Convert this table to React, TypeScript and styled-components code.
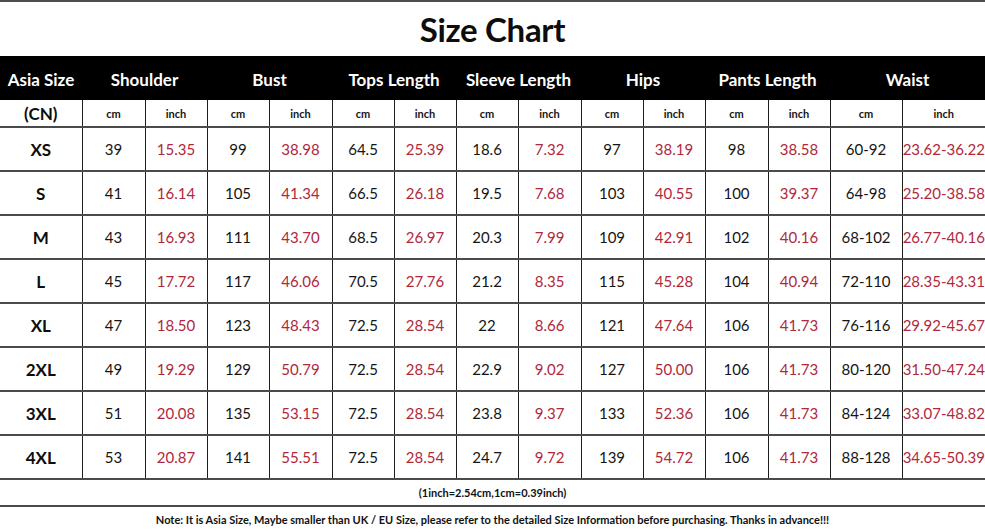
import React from "react";
import styled, { createGlobalStyle } from "styled-components";

const GlobalStyle = createGlobalStyle`
  html, body {
    margin: 0;
    padding: 0;
    background: #ffffff;
  }
  body {
    font-family: "Lato", "Open Sans", sans-serif;
    color: #111111;
  }
`;

const Page = styled.div`
  width: 985px;
  height: 532px;
  overflow: hidden;
  background: #ffffff;
`;

const Title = styled.h1`
  margin: 0;
  height: 54px;
  border-top: 2px solid #4d4d4d;
  display: flex;
  align-items: center;
  justify-content: center;
  font-size: 33px;
  font-weight: 700;
  letter-spacing: -0.3px;
  color: #0d0d0d;
`;

const Table = styled.table`
  width: 985px;
  table-layout: fixed;
  border-collapse: collapse;
  border-spacing: 0;
`;

const HeadRow = styled.tr`
  height: 44px;
  background: #000000;
`;

const HeadCell = styled.th`
  padding: 2px 0 0;
  color: #ffffff;
  font-size: 17px;
  font-weight: 700;
  text-align: center;
  white-space: nowrap;
`;

const UnitRow = styled.tr`
  height: 27px;
`;

const DataRow = styled.tr`
  height: 44px;
`;

const Cell = styled.td<{ $red?: boolean; $first?: boolean }>`
  padding: 0;
  text-align: center;
  white-space: nowrap;
  font-size: 15px;
  color: ${({ $red }) => ($red ? "#b0283c" : "#151515")};
  border-bottom: 2px solid #4a4a4a;
  border-left: ${({ $first }) => ($first ? "none" : "1px solid #1e1e1e")};
`;

const SizeCell = styled(Cell)`
  font-size: 17px;
  font-weight: 700;
  color: #0d0d0d;
`;

const UnitCell = styled(Cell)`
  font-size: 11px;
  font-weight: 700;
`;

const FootRow = styled.tr<{ $h: number }>`
  height: ${({ $h }) => $h}px;
`;

const FootCell = styled.td<{ $line?: boolean }>`
  padding: 0;
  text-align: center;
  white-space: nowrap;
  font-size: 11px;
  font-weight: 700;
  color: #111111;
  border-bottom: ${({ $line }) => ($line ? "2px solid #4a4a4a" : "none")};
`;

const widths = [82, 63, 62, 62, 63, 62, 62, 62, 63, 62, 62, 63, 62, 72, 83];

const groups = [
  "Shoulder",
  "Bust",
  "Tops Length",
  "Sleeve Length",
  "Hips",
  "Pants Length",
  "Waist",
];

const rows: [string, ...string[]][] = [
  ["XS", "39", "15.35", "99", "38.98", "64.5", "25.39", "18.6", "7.32", "97", "38.19", "98", "38.58", "60-92", "23.62-36.22"],
  ["S", "41", "16.14", "105", "41.34", "66.5", "26.18", "19.5", "7.68", "103", "40.55", "100", "39.37", "64-98", "25.20-38.58"],
  ["M", "43", "16.93", "111", "43.70", "68.5", "26.97", "20.3", "7.99", "109", "42.91", "102", "40.16", "68-102", "26.77-40.16"],
  ["L", "45", "17.72", "117", "46.06", "70.5", "27.76", "21.2", "8.35", "115", "45.28", "104", "40.94", "72-110", "28.35-43.31"],
  ["XL", "47", "18.50", "123", "48.43", "72.5", "28.54", "22", "8.66", "121", "47.64", "106", "41.73", "76-116", "29.92-45.67"],
  ["2XL", "49", "19.29", "129", "50.79", "72.5", "28.54", "22.9", "9.02", "127", "50.00", "106", "41.73", "80-120", "31.50-47.24"],
  ["3XL", "51", "20.08", "135", "53.15", "72.5", "28.54", "23.8", "9.37", "133", "52.36", "106", "41.73", "84-124", "33.07-48.82"],
  ["4XL", "53", "20.87", "141", "55.51", "72.5", "28.54", "24.7", "9.72", "139", "54.72", "106", "41.73", "88-128", "34.65-50.39"],
];

export default function App() {
  return (
    <Page>
      <GlobalStyle />
      <Title>Size Chart</Title>
      <Table>
        <colgroup>
          {widths.map((w, i) => (
            <col key={i} style={{ width: w }} />
          ))}
        </colgroup>
        <thead>
          <HeadRow>
            <HeadCell>Asia Size</HeadCell>
            {groups.map((g) => (
              <HeadCell key={g} colSpan={2}>
                {g}
              </HeadCell>
            ))}
          </HeadRow>
        </thead>
        <tbody>
          <UnitRow>
            <SizeCell $first>(CN)</SizeCell>
            {groups.map((g) => (
              <React.Fragment key={g}>
                <UnitCell>cm</UnitCell>
                <UnitCell>inch</UnitCell>
              </React.Fragment>
            ))}
          </UnitRow>
          {rows.map(([size, ...values]) => (
            <DataRow key={size}>
              <SizeCell $first>{size}</SizeCell>
              {values.map((v, i) => (
                <Cell key={i} $red={i % 2 === 1}>
                  {v}
                </Cell>
              ))}
            </DataRow>
          ))}
        </tbody>
        <tfoot>
          <FootRow $h={27}>
            <FootCell colSpan={15} $line>
              (1inch=2.54cm,1cm=0.39inch)
            </FootCell>
          </FootRow>
          <FootRow $h={26}>
            <FootCell colSpan={15}>
              Note: It is Asia Size, Maybe smaller than UK / EU Size, please refer to the detailed Size Information before purchasing. Thanks in advance!!!
            </FootCell>
          </FootRow>
        </tfoot>
      </Table>
    </Page>
  );
}
